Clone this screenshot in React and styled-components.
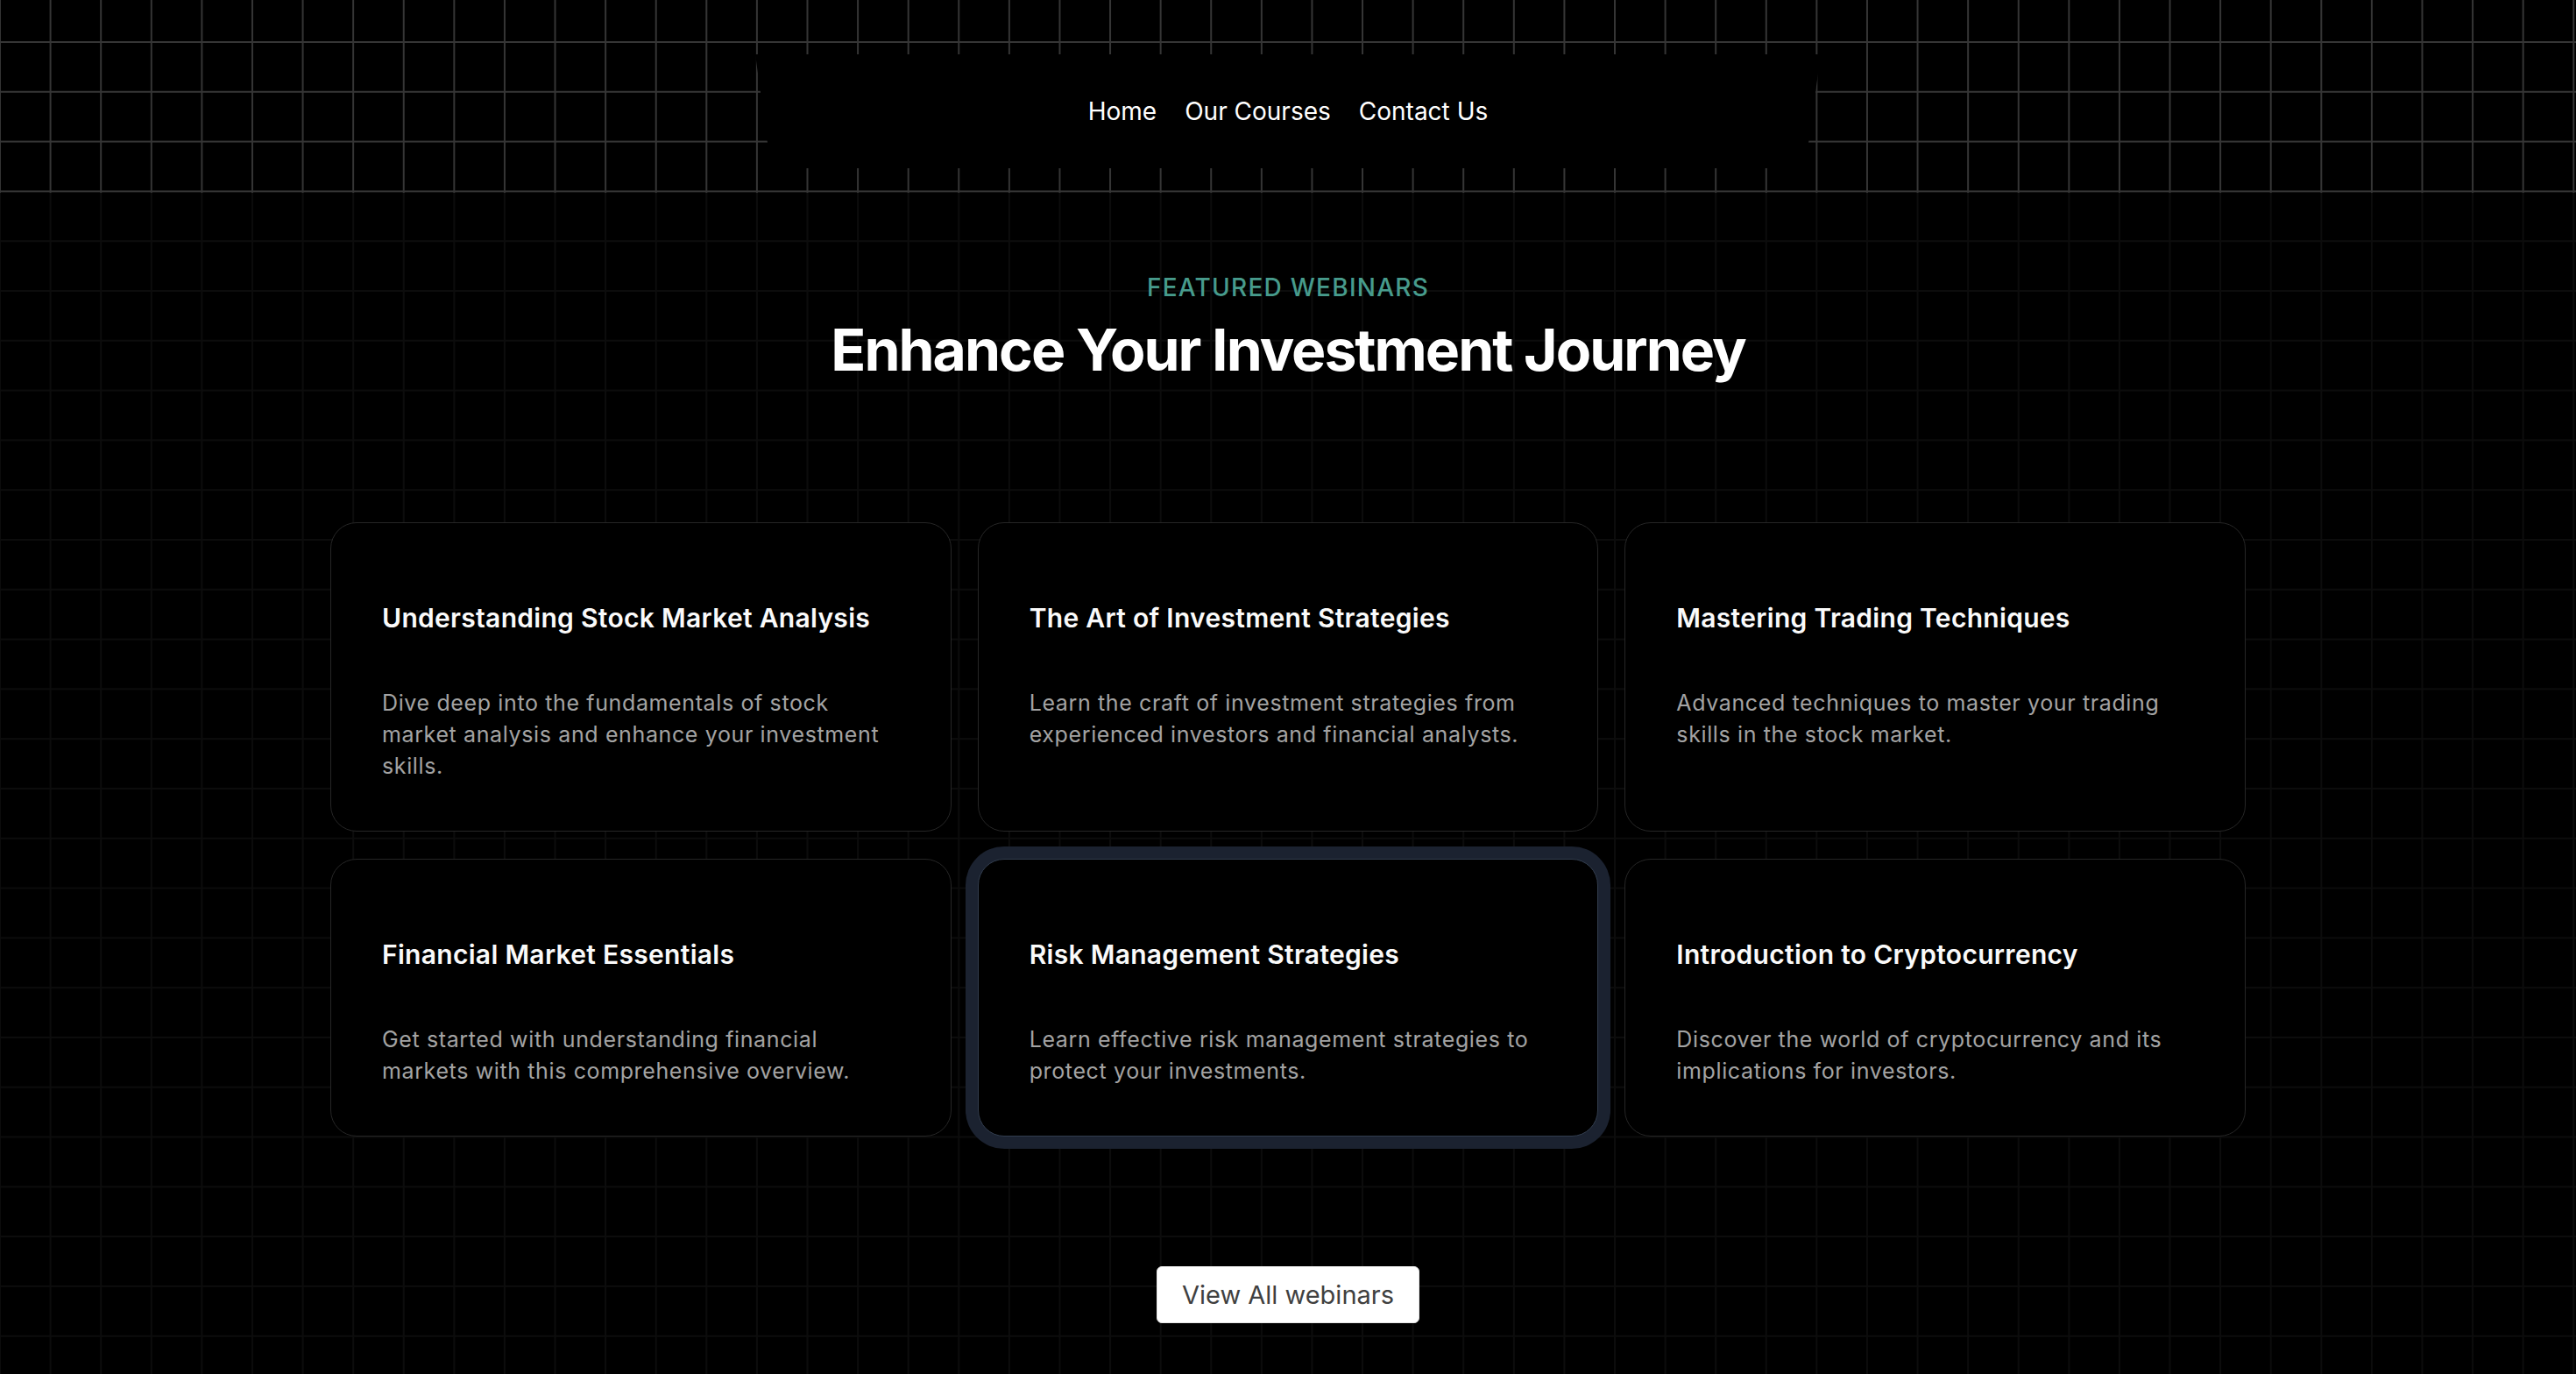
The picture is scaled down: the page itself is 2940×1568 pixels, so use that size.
import React from 'react';
import styled, { createGlobalStyle, css } from 'styled-components';

const webinars = [
  {
    title: 'Understanding Stock Market Analysis',
    text: 'Dive deep into the fundamentals of stock market analysis and enhance your investment skills.',
  },
  {
    title: 'The Art of Investment Strategies',
    text: 'Learn the craft of investment strategies from experienced investors and financial analysts.',
  },
  {
    title: 'Mastering Trading Techniques',
    text: 'Advanced techniques to master your trading skills in the stock market.',
  },
  {
    title: 'Financial Market Essentials',
    text: 'Get started with understanding financial markets with this comprehensive overview.',
  },
  {
    title: 'Risk Management Strategies',
    text: 'Learn effective risk management strategies to protect your investments.',
    active: true,
  },
  {
    title: 'Introduction to Cryptocurrency',
    text: 'Discover the world of cryptocurrency and its implications for investors.',
  },
];

export default function App() {
  return (
    <>
      <GlobalStyle />
      <Page>
        <Header>
          <Nav>
            <NavLink href="#">Home</NavLink>
            <NavLink href="#">Our Courses</NavLink>
            <NavLink href="#">Contact Us</NavLink>
          </Nav>
        </Header>

        <Section>
          <Eyebrow>Featured Webinars</Eyebrow>
          <Heading>Enhance Your Investment Journey</Heading>

          <CardGrid>
            {webinars.map((w) => (
              <Card key={w.title} $active={w.active}>
                <CardTitle>{w.title}</CardTitle>
                <CardText>{w.text}</CardText>
              </Card>
            ))}
          </CardGrid>

          <ViewAllButton type="button">View All webinars</ViewAllButton>
        </Section>
      </Page>
    </>
  );
}

const GlobalStyle = createGlobalStyle`
  html, body {
    margin: 0;
    padding: 0;
    background: #000;
  }
  body {
    font-family: Inter, "Noto Sans", "Liberation Sans", sans-serif;
    -webkit-font-smoothing: antialiased;
  }
  * {
    box-sizing: border-box;
  }
`;

// shared grid pattern, only the line colour changes between header and page
const gridLines = (color) => css`
  background-image:
    linear-gradient(to right, ${color} 2px, transparent 2px),
    linear-gradient(to bottom, ${color} 2px, transparent 2px);
  background-size: 57.6px 56.8px;
  background-position: -1px 47px;
`;

const Page = styled.div`
  min-height: 1568px;
  background-color: #000;
  ${gridLines('#0c0c0c')}
  overflow: hidden;
`;

const Header = styled.header`
  height: 220px;
  background-color: #000;
  ${gridLines('#353535')}
  display: flex;
  justify-content: center;
  align-items: flex-start;
  padding-top: 62px;
`;

const Nav = styled.nav`
  width: 1216px;
  height: 130px;
  background: #000;
  clip-path: polygon(0 0, 100% 0, calc(100% - 18px) 100%, 18px 100%);
  display: flex;
  justify-content: center;
  align-items: center;
  gap: 32px;
`;

const NavLink = styled.a`
  color: #fff;
  font-size: 28px;
  line-height: 1;
  text-decoration: none;
  font-weight: 400;
`;

const Section = styled.section`
  display: flex;
  flex-direction: column;
  align-items: center;
  padding-top: 88px;
  padding-bottom: 60px;
`;

const Eyebrow = styled.p`
  margin: 0;
  color: #479b8c;
  font-size: 28px;
  line-height: 40px;
  font-weight: 500;
  letter-spacing: 0.045em;
  text-transform: uppercase;
`;

const Heading = styled.h2`
  margin: 12px 0 0;
  color: #fff;
  font-size: 66px;
  line-height: 78px;
  font-weight: 700;
  letter-spacing: -0.03em;
`;

const CardGrid = styled.div`
  width: 2186px;
  margin-top: 158px;
  display: grid;
  grid-template-columns: repeat(3, 1fr);
  gap: 31px 30px;
`;

const Card = styled.article`
  background: #000;
  border: 1px solid ${(p) => (p.$active ? '#323d4e' : '#262626')};
  border-radius: 30px;
  padding: 56px 58px 56px;
  box-shadow: ${(p) => (p.$active ? '0 0 0 14px #1b2230' : 'none')};
`;

const CardTitle = styled.h3`
  margin: 32px 0 0;
  color: #fafafa;
  font-size: 30px;
  line-height: 40px;
  font-weight: 600;
  letter-spacing: 0.01em;
`;

const CardText = styled.p`
  margin: 59px 0 0;
  color: #a3a3a3;
  font-size: 25px;
  line-height: 36px;
  font-weight: 400;
  letter-spacing: 0.025em;
`;

const ViewAllButton = styled.button`
  margin-top: 148px;
  height: 65px;
  padding: 0 28px;
  background: #fff;
  color: #404040;
  border: 1px solid #e5e5e5;
  border-radius: 6px;
  font-family: inherit;
  font-size: 29px;
  font-weight: 400;
  cursor: pointer;
`;
